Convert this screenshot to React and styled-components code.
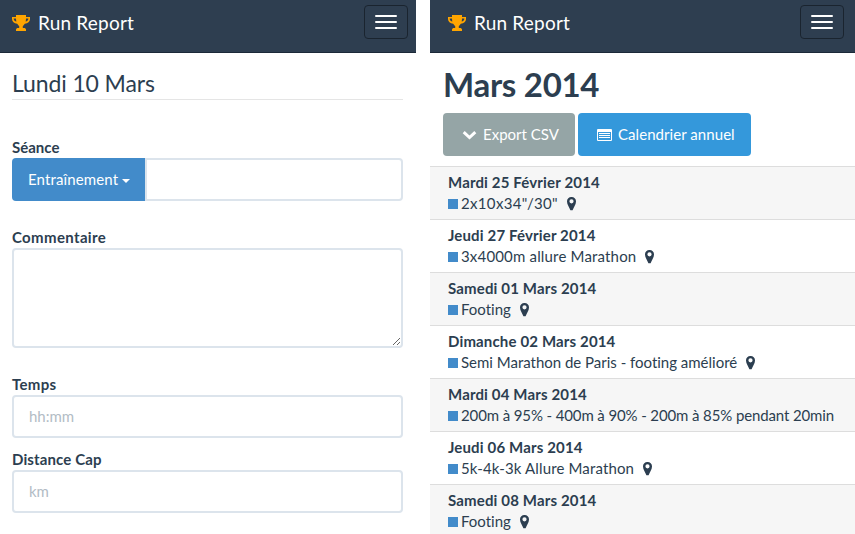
import React from "react";
import styled, { createGlobalStyle } from "styled-components";

const Global = createGlobalStyle`
  *, *::before, *::after { box-sizing: border-box; }
  body { margin: 0; background: #fff; overflow: hidden; font-variant-ligatures: none; }
  body, input, textarea, button { font-family: Lato, "Liberation Sans", sans-serif; font-size: 15px; line-height: 21px; color: #2c3e50; }
`;
const Page = styled.div`display: flex; gap: 14px; width: 855px; height: 534px; overflow: hidden;`;
const Screen = styled.section`width: ${(p) => p.$width}px; flex: none;`;
const Navbar = styled.header`
  display: flex; justify-content: space-between; height: 53px;
  padding: 5px ${(p) => p.$right}px 0 ${(p) => p.$left}px;
  background: #2e3e50; border-bottom: 1px solid #1c2938;
`;
const Brand = styled.div`
  display: flex; align-items: center; gap: 8px; height: 35px; color: #fff;
  font-size: 19px; letter-spacing: 0.2px; white-space: nowrap;
  svg { display: block; flex: none; margin-top: 1px; }
`;
const Toggle = styled.button`
  display: flex; flex-direction: column; gap: 4px; width: 44px; height: 34px; padding: 9px 10px;
  border: 1px solid #1a242f; border-radius: 4px; background: transparent;
`;
const Bar = styled.span`display: block; width: 22px; height: 2px; border-radius: 1px; background: #fff;`;
const Form = styled.form`display: flex; flex-direction: column; padding: 0 13px 0 12px;`;
const Legend = styled.h2`
  height: 47px; margin: 0 0 37px; padding-top: 14px; border-bottom: 1px solid #e5e5e5;
  font-size: 23px; line-height: 32px; font-weight: 400; letter-spacing: -0.12px;
`;
const Field = styled.div`display: flex; flex-direction: column; margin-bottom: ${(p) => p.$after || 0}px;`;
const Label = styled.label`font-weight: 700; height: 21px; letter-spacing: ${(p) => p.$spacing || 0}px;`;
const Group = styled.div`display: flex;`;
const Input = styled.input`
  flex: 1 1 auto; min-width: 0; height: 43px; padding: 7px 15px 9px; border: 2px solid #dce4ec;
  border-radius: ${(p) => (p.$joined ? "0 4px 4px 0" : "4px")}; background: #fff; outline: 0;
  &::placeholder { color: #b2bcc5; opacity: 1; }
`;
const Area = styled.textarea`
  display: block; height: 100px; padding: 10px 15px; border: 2px solid #dce4ec; border-radius: 4px; resize: vertical;
`;
const Dropdown = styled.button`
  display: flex; align-items: center; gap: 4px; width: 133px; height: 43px; padding: 0 0 0 16px;
  border: 0; border-radius: 4px 0 0 4px; background: #428bca; color: #fff; letter-spacing: 0.13px;
`;
const Caret = styled.span`border: 4px solid transparent; border-top-color: #fff; border-bottom: 0; margin-top: 3px;`;
const Title = styled.h1`
  margin: 0; padding: 11px 0 0 13px; height: 60px; font-size: 33px; line-height: 40px; font-weight: 700;
  letter-spacing: -0.3px;
`;
const Actions = styled.div`display: flex; gap: 3px; padding-left: 13px; margin-bottom: 10px;`;
const Action = styled.button`
  display: flex; align-items: center; width: ${(p) => p.$width}px; height: 43px; padding: 0 0 0 19px; gap: 6px;
  border: 0; border-radius: 4px; background: ${(p) => p.$color}; color: #fff; white-space: nowrap;
  letter-spacing: ${(p) => p.$spacing || 0}px;
  svg { flex: none; }
`;
const List = styled.ul`list-style: none; margin: 0; padding: 0;`;
const Row = styled.li`
  height: 53px; padding: 5px 0 5px 18px; border-top: 1px solid #ddd; background: #fff; white-space: nowrap;
  &:nth-child(odd) { background: #f6f6f6; }
`;
const Day = styled.div`font-weight: 700; letter-spacing: 0.15px;`;
const Session = styled.div`
  display: flex; align-items: center; letter-spacing: ${(p) => p.$spacing}px;
  svg { margin-left: 9px; flex: none; }
`;
const Marker = styled.span`width: 10px; height: 10px; margin: 1px 3px 0 0; background: #428bca;`;

const Trophy = () => (
  <svg width="18" height="17" viewBox="0 0 18 17" fill="#ffa500">
    <path fillRule="evenodd" d="M4 0h10v2h4v2c0 2.500-2.200 4.400-5.200 4.700C12 10 11.300 10.700 10.800 11v2H12c1 0 2 .7 2 1.600V16H4v-1.400C4 13.700 5 13 6 13h1.200v-2C6.700 10.700 6 10 5.200 8.700 2.200 8.400 0 6.500 0 4V2h4zM1.600 3.500C1.600 5 2.700 6.200 4.400 6.600A9 9 0 0 1 4 3.500zM16.400 3.500H14a9 9 0 0 1-.4 3.100c1.700-.4 2.800-1.600 2.800-3.100z" />
  </svg>
);
const Pin = () => (
  <svg width="9" height="14" viewBox="0 0 9 14" fill="#2c3e50">
    <path fillRule="evenodd" d="M4.500 0A4.400 4.400 0 0 1 9 4.500C9 7.500 6.800 10 5.600 13.300H3.400C2.200 10 0 7.500 0 4.500A4.400 4.400 0 0 1 4.500 0zm0 2.200a2.100 2.100 0 1 0 0 4.200 2.100 2.100 0 0 0 0-4.200z" />
  </svg>
);
const Chevron = () => (
  <svg width="15" height="10" viewBox="0 0 15 10" fill="none">
    <path d="M1.700 2.200 7.500 7.500l5.800-5.300" stroke="#fff" strokeWidth="3" />
  </svg>
);
const ListIcon = () => (
  <svg width="15" height="12" viewBox="0 0 15 12">
    <path fill="#fff" fillRule="evenodd" d="M1 0h13q1 0 1 1v10q0 1-1 1H1q-1 0-1-1V1q0-1 1-1zM1 3v8h13V3z" />
    <path d="M2 4.500h11M2 6.500h11M2 8.500h11" stroke="#fff" />
  </svg>
);

const Header = ({ left, right }) => (
  <Navbar $left={left} $right={right}>
    <Brand><Trophy />Run Report</Brand>
    <Toggle aria-label="Menu" type="button"><Bar /><Bar /><Bar /></Toggle>
  </Navbar>
);

const sessions = [
  { day: "Mardi 25 Février 2014", text: '2x10x34"/30"', pin: true, spacing: 0.33 },
  { day: "Jeudi 27 Février 2014", text: "3x4000m allure Marathon", pin: true, spacing: 0.17 },
  { day: "Samedi 01 Mars 2014", text: "Footing", pin: true },
  { day: "Dimanche 02 Mars 2014", text: "Semi Marathon de Paris - footing amélioré", pin: true, spacing: -0.01 },
  { day: "Mardi 04 Mars 2014", text: "200m à 95% - 400m à 90% - 200m à 85% pendant 20min", spacing: -0.12 },
  { day: "Jeudi 06 Mars 2014", text: "5k-4k-3k Allure Marathon", pin: true, spacing: 0.14 },
  { day: "Samedi 08 Mars 2014", text: "Footing", pin: true },
];

export default function App() {
  return (
    <Page>
      <Global />
      <Screen $width={416}>
        <Header left={12} right={8} />
        <Form>
          <Legend>Lundi 10 Mars</Legend>
          <Field $after={26}>
            <Label>Séance</Label>
            <Group>
              <Dropdown type="button">Entraînement<Caret /></Dropdown>
              <Input $joined aria-label="Séance" />
            </Group>
          </Field>
          <Field $after={26}>
            <Label $spacing={0.35}>Commentaire</Label>
            <Area aria-label="Commentaire" />
          </Field>
          <Field $after={11}>
            <Label $spacing={0.3}>Temps</Label>
            <Group><Input placeholder="hh:mm" /></Group>
          </Field>
          <Field>
            <Label $spacing={0.12}>Distance Cap</Label>
            <Group><Input placeholder="km" /></Group>
          </Field>
        </Form>
      </Screen>
      <Screen $width={425}>
        <Header left={18} right={11} />
        <Title>Mars 2014</Title>
        <Actions>
          <Action type="button" $width={132} $color="#95a5a6"><Chevron />Export CSV</Action>
          <Action type="button" $width={173} $color="#3498db" $spacing={0.06}><ListIcon />Calendrier annuel</Action>
        </Actions>
        <List>
          {sessions.map((s) => (
            <Row key={s.day}>
              <Day>{s.day}</Day>
              <Session $spacing={s.spacing || 0}><Marker />{s.text}{s.pin && <Pin />}</Session>
            </Row>
          ))}
        </List>
      </Screen>
    </Page>
  );
}
